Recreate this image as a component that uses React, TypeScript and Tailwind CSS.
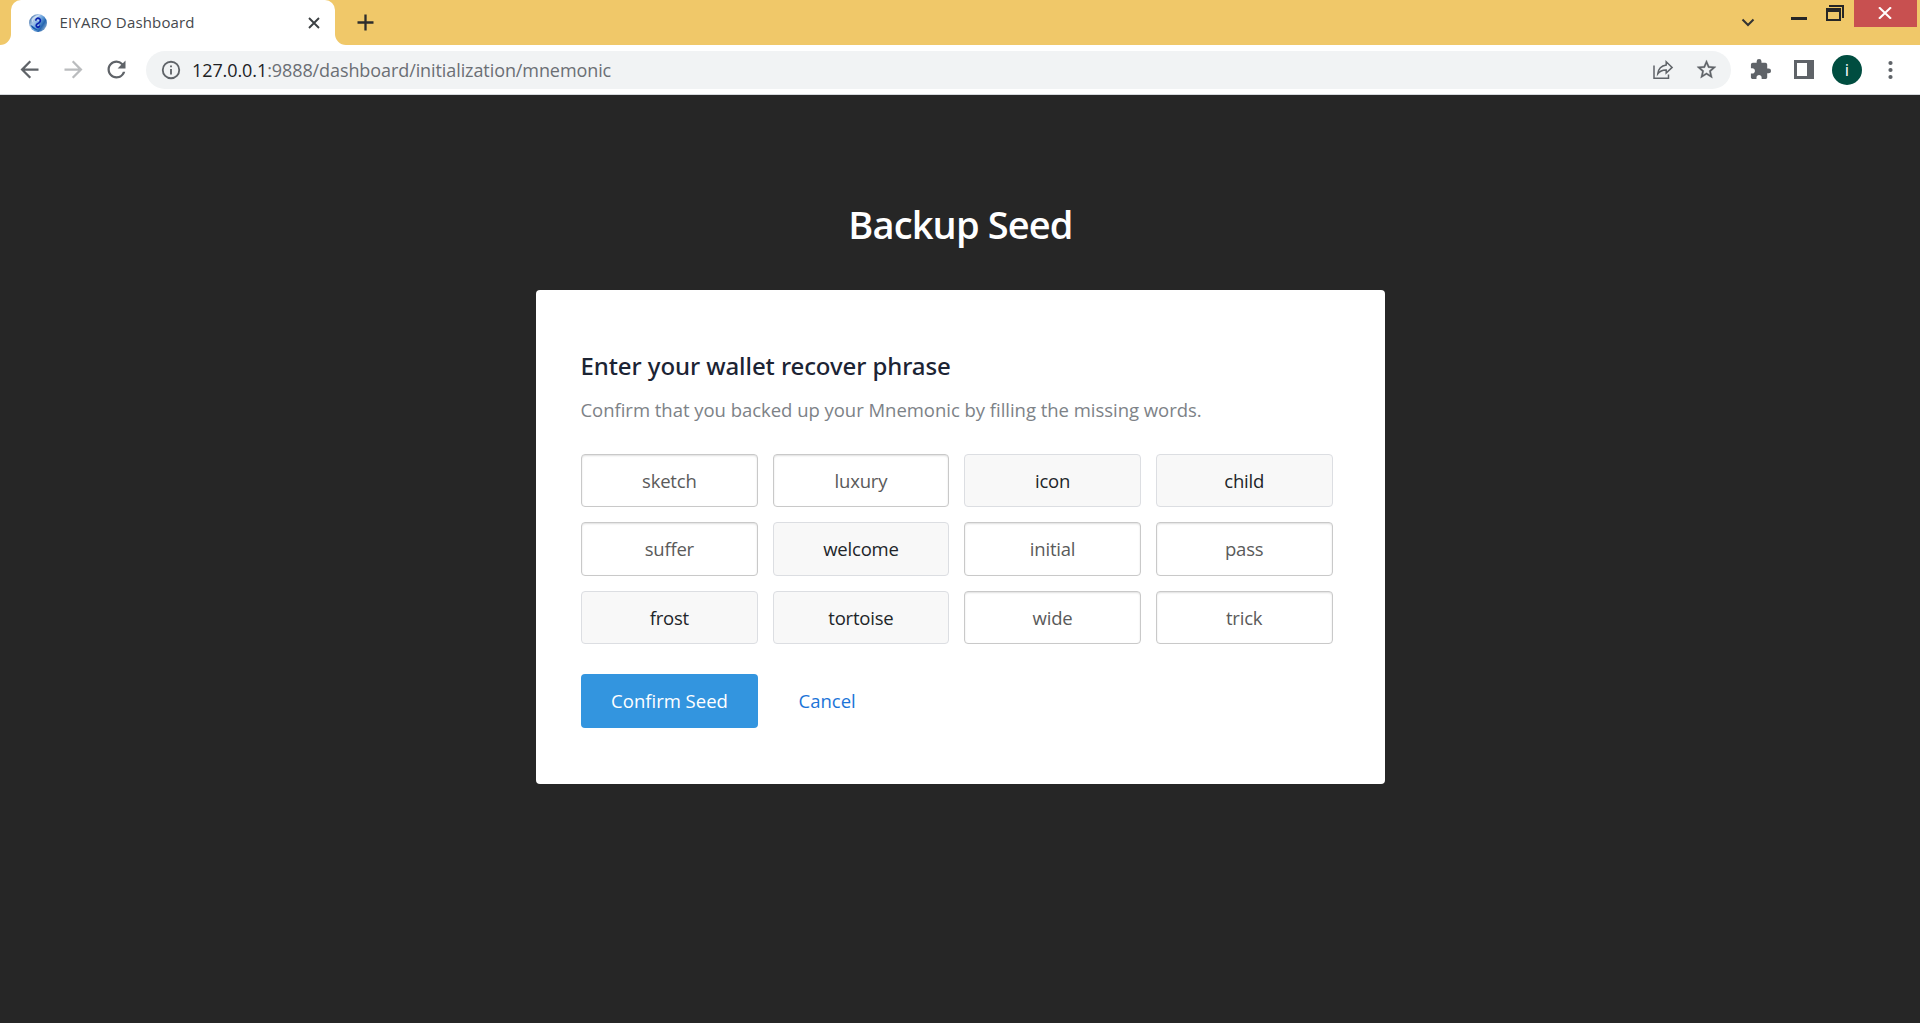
import type { ReactNode } from "react";

type Word = { text: string; given?: boolean };

const WORDS: Word[] = [
  { text: "sketch" },
  { text: "luxury" },
  { text: "icon", given: true },
  { text: "child", given: true },
  { text: "suffer" },
  { text: "welcome", given: true },
  { text: "initial" },
  { text: "pass" },
  { text: "frost", given: true },
  { text: "tortoise", given: true },
  { text: "wide" },
  { text: "trick" },
];

function Icon({ className, children, box = "0 0 24 24" }: { className: string; children: ReactNode; box?: string }) {
  return (
    <svg viewBox={box} className={`shrink-0 ${className}`} fill="currentColor" aria-hidden="true">
      {children}
    </svg>
  );
}

function Favicon() {
  return (
    <svg viewBox="0 0 18 18" className="size-[18px] shrink-0" aria-hidden="true">
      <defs>
        <linearGradient id="globe" x1="0" y1="0.2" x2="1" y2="0.85">
          <stop offset="0" stopColor="#3d6ba5" />
          <stop offset="0.3" stopColor="#a9c8e8" />
          <stop offset="0.5" stopColor="#6ba3dd" />
          <stop offset="0.72" stopColor="#2466b0" />
          <stop offset="1" stopColor="#a9bfd8" />
        </linearGradient>
      </defs>
      <circle cx="9" cy="9" r="9" fill="url(#globe)" />
      <path d="M2.500 5.500C4 2.500 8 .8 11 1.500 8 3 4.500 5 3 9z" fill="#e3eefa" opacity=".7" />
      <path d="M1.500 11c2.500.5 4 3 7.500 5-3.500 0-6.500-2-7.500-5z" fill="#1457ad" />
      <path
        d="M7 6.800c-.6-2 1.500-3.200 3.200-2.300 1.900 1 1.500 3.200-.2 4.300L7.900 10.200c-1.200 1-.8 2.600.5 2.900 1.200.2 2.100-.5 2.200-1.600"
        fill="none"
        stroke="#0a1fae"
        strokeWidth="1.600"
      />
      <path d="M8.600 6.400l1 .2M8.800 11.500l.8-.3" stroke="#fff" strokeWidth=".9" />
    </svg>
  );
}

function TabStrip() {
  return (
    <div className="flex h-[45px] bg-white">
      <div className="w-[11px] rounded-br-[11px] bg-[#f0c869]" />
      <div className="w-[324px] bg-[#f0c869]">
        <div className="flex h-full items-center rounded-t-[10px] bg-white pl-[18px] pr-[15px]">
          <Favicon />
          <span className="ml-[12.5px] flex-1 pb-px text-[15px] leading-5 tracking-[0.16px] text-[#45484c]">
            EIYARO Dashboard
          </span>
          <Icon className="size-[12px] text-[#3c4043]" box="0 0 12 12">
            <path d="M1 1l10 10M11 1L1 11" stroke="currentColor" strokeWidth="1.900" />
          </Icon>
        </div>
      </div>
      <div className="flex flex-1 items-start rounded-bl-[11px] bg-[#f0c869] pl-[22px] pr-[3px]">
        <Icon className="mt-[14px] size-[17px] text-[#2d2d2d]" box="0 0 17 17">
          <path d="M8.500.5v16M.5 8.500h16" stroke="currentColor" strokeWidth="2.300" />
        </Icon>
        <Icon className="ml-auto mt-[18px] h-[9px] w-[14px] text-[#333]" box="0 0 14 9">
          <path d="M1.500 1.500L7 7l5.500-5.500" fill="none" stroke="currentColor" strokeWidth="2" />
        </Icon>
        <div className="ml-[36px] mt-[17px] h-[3px] w-[16px] bg-[#262626]" />
        <Icon className="ml-[19px] mt-[5px] h-[16px] w-[18px] text-[#262626]" box="0 0 18 16">
          <path d="M3 0h15v13h-2V2H3zM0 3h15v13H0zm2 4v7h11V7z" fillRule="evenodd" />
        </Icon>
        <div className="ml-[10px] flex h-[27px] w-[63px] items-start justify-center bg-[#c85050] pr-px pt-[7px] text-white">
          <Icon className="h-[12px] w-[14px]" box="0 0 14 12">
            <path d="M1 .3l12 11.400M13 .3L1 11.700" stroke="currentColor" strokeWidth="2.100" />
          </Icon>
        </div>
      </div>
    </div>
  );
}

function Toolbar() {
  return (
    <div className="flex h-[50px] items-center border-b border-[#d5d8dc] bg-white pl-[16px] pr-[27px] text-[#5f6368]">
      <Icon className="size-[27px]">
        <path d="M20 11H7.830l5.590-5.590L12 4l-8 8 8 8 1.410-1.410L7.830 13H20v-2z" />
      </Icon>
      <Icon className="ml-[16.500px] size-[27px] text-[#babcbe]">
        <path d="M12 4l-1.410 1.410L16.170 11H4v2h12.170l-5.580 5.590L12 20l8-8z" />
      </Icon>
      <Icon className="ml-[16px] size-[27px]">
        <path d="M17.650 6.350A7.958 7.958 0 0 0 12 4c-4.420 0-7.990 3.580-7.990 8s3.570 8 7.990 8c3.730 0 6.840-2.550 7.730-6h-2.080A5.990 5.990 0 0 1 12 18c-3.310 0-6-2.690-6-6s2.690-6 6-6c1.660 0 3.140.69 4.220 1.780L13 11h7V4l-2.350 2.350z" />
      </Icon>
      <div className="ml-[16px] flex h-[38px] flex-1 items-center rounded-full bg-[#f1f3f4] pl-[14px] pr-[13px]">
        <Icon className="size-[22px]">
          <path d="M11 7h2v2h-2zm0 4h2v6h-2zm1-9a10 10 0 1 0 0 20 10 10 0 0 0 0-20zm0 18a8 8 0 1 1 0-16 8 8 0 0 1 0 16z" />
        </Icon>
        <span className="ml-[10.5px] flex-1 pt-px text-[18px] leading-6 tracking-[-0.09px] text-[#6b6f74]">
          <span className="text-[#202124]">127.0.0.1</span>:9888/dashboard/initialization/mnemonic
        </span>
        <Icon className="mr-[21px] h-[20px] w-[21px]" box="0 0 21 20">
          <path
            d="M1 5.500V18.300h14.500V14.500M13.200 1.800l5.900 5.600-5.900 5.600V9.900C9.500 9.800 6.800 11 4.800 13.700 5.400 8.600 8.500 5.700 13.200 5z"
            fill="none"
            stroke="currentColor"
            strokeWidth="1.500"
          />
        </Icon>
        <Icon className="size-[23px]">
          <path
            d="M22 9.240l-7.190-.62L12 2 9.190 8.630 2 9.240l5.460 4.730L5.820 21 12 17.270 18.180 21l-1.630-7.030L22 9.240zM12 15.400l-3.760 2.270 1-4.280-3.320-2.880 4.380-.38L12 6.100l1.710 4.040 4.380.38-3.320 2.880 1 4.280L12 15.400z"
            stroke="currentColor"
            strokeWidth=".3"
          />
        </Icon>
      </div>
      <Icon className="ml-[17.5px] size-[23px]">
        <path d="M20.500 11H19V7c0-1.100-.9-2-2-2h-4V3.500a2.500 2.500 0 0 0-5 0V5H4c-1.100 0-1.990.9-1.990 2v3.800H3.500c1.490 0 2.700 1.210 2.700 2.700s-1.210 2.700-2.700 2.700H2V20c0 1.100.9 2 2 2h3.800v-1.500c0-1.490 1.210-2.700 2.700-2.700 1.490 0 2.700 1.210 2.700 2.700V22H17c1.100 0 2-.9 2-2v-4h1.500a2.500 2.500 0 0 0 0-5z" />
      </Icon>
      <Icon className="ml-[22px] h-[19px] w-[20px]" box="0 0 20 19">
        <path d="M0 0h20v19H0zm3 3v13h10V3z" fillRule="evenodd" />
      </Icon>
      <div className="ml-[18.5px] flex size-[30px] items-center justify-center rounded-full bg-[#004d40] text-[17px] leading-5 text-white">
        i
      </div>
      <Icon className="ml-[26px] h-[20px] w-[5px]" box="0 0 5 20">
        <circle cx="2.500" cy="3" r="2.100" />
        <circle cx="2.500" cy="10" r="2.100" />
        <circle cx="2.500" cy="17" r="2.100" />
      </Icon>
    </div>
  );
}

function WordBox({ text, given }: Word) {
  const look = given
    ? "border-[#dcdee2] bg-[#f8f8f8] pt-[0.5px] text-[#212529]"
    : "border-[#c9c9c9] bg-white pt-px text-[#5a5a5a] shadow-[inset_0_1px_2px_rgba(0,0,0,0.13)]";
  return (
    <div className={`flex items-center justify-center rounded-[4px] border tracking-[-0.2px] ${look}`}>{text}</div>
  );
}

export default function App() {
  return (
    <div className="flex h-[1023px] w-[1920px] flex-col overflow-hidden bg-[#262626] font-['Open_Sans','Noto_Sans',sans-serif]">
      <TabStrip />
      <Toolbar />
      <main className="flex flex-1 flex-col items-center pt-[106px]">
        <h1 className="pl-px text-[38px] font-semibold leading-[46px] tracking-[-0.85px] text-white">Backup Seed</h1>
        <section className="mt-[43px] h-[494px] w-[849px] rounded-[4px] bg-white pl-[45px] pr-[52px] pt-[60px] text-[18.5px] leading-7">
          <h2 className="font-['Noto_Sans',sans-serif] text-[24px] font-medium leading-8 tracking-[-0.08px] text-[#1c2434]">
            Enter your wallet recover phrase
          </h2>
          <p className="mt-[14px] tracking-[-0.03px] text-[#7d8287]">
            Confirm that you backed up your Mnemonic by filling the missing words.
          </p>
          <div className="ml-[0.5px] mt-[30px] grid h-[190px] grid-cols-4 grid-rows-3 gap-[15px]">
            {WORDS.map((word) => (
              <WordBox key={word.text} {...word} />
            ))}
          </div>
          <div className="mt-[30px] flex h-[54px]">
            <button className="w-[177px] rounded-[4px] bg-[#3395df] pl-px text-white">Confirm Seed</button>
            <button className="ml-[41px] text-[#1b74d8]">Cancel</button>
          </div>
        </section>
      </main>
    </div>
  );
}
